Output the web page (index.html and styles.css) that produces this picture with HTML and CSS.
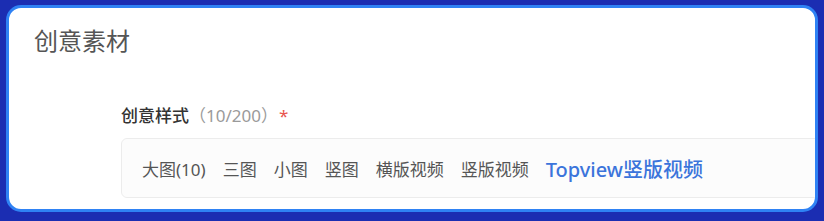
FILE: index.html
```html
<!DOCTYPE html>
<html lang="zh-CN">
<head>
  <meta charset="UTF-8" />
  <meta name="viewport" content="width=device-width, initial-scale=1.0" />
  <title>创意素材</title>
  <link rel="stylesheet" href="styles.css">
</head>
<body>

  <!-- Creative material card -->
  <div class="card">
    <h2 class="card-title">创意素材</h2>

    <div class="form-item">
      <div class="form-label">
        <span class="label-text">创意样式</span>
        <span class="label-count">（10/200）</span>
        <span class="required">*</span>
      </div>

      <div class="style-tabs">
        <span class="style-tab">大图(10)</span>
        <span class="style-tab">三图</span>
        <span class="style-tab">小图</span>
        <span class="style-tab">竖图</span>
        <span class="style-tab">横版视频</span>
        <span class="style-tab">竖版视频</span>
        <span class="style-tab active">Topview竖版视频</span>
      </div>
    </div>
  </div>

</body>
</html>
```

FILE: styles.css
```css
html, body {
  height: 100%;
}
body {
  margin: 0;
  padding: 5px 6px 9px 6px;
  box-sizing: border-box;
  background-color: #1b2db2;
  font-family: "Noto Sans", "Noto Sans CJK SC", sans-serif;
}

/* Card */
.card {
  height: 100%;
  box-sizing: border-box;
  background-color: #fff;
  border: 3px solid #2f82f4;
  border-radius: 15px;
  overflow: hidden;
  padding: 16px 0 0 0;
}
.card-title {
  margin: 0 0 0 25px;
  font-size: 24px;
  line-height: 34px;
  font-weight: normal;
  color: #555;
}

/* Form item */
.form-item {
  margin: 47px 0 0 112px;
}
.form-label {
  display: flex;
  align-items: center;
  height: 22px;
  font-size: 17px;
  line-height: 22px;
}
.label-text {
  color: #333;
  font-weight: 500;
}
.label-count {
  color: #9a9a9a;
}
.required {
  color: #e8554e;
  margin-left: 1px;
}

/* Style tabs */
.style-tabs {
  display: flex;
  align-items: center;
  gap: 17px;
  width: 900px;
  height: 60px;
  box-sizing: border-box;
  margin-top: 11px;
  padding: 0 20px;
  background-color: #fcfcfc;
  border: 1px solid #ececec;
  border-radius: 6px;
}
.style-tab {
  font-size: 17px;
  color: #555;
  white-space: nowrap;
}
.style-tab.active {
  font-size: 20px;
  color: #3b74db;
  font-weight: 500;
}
```
